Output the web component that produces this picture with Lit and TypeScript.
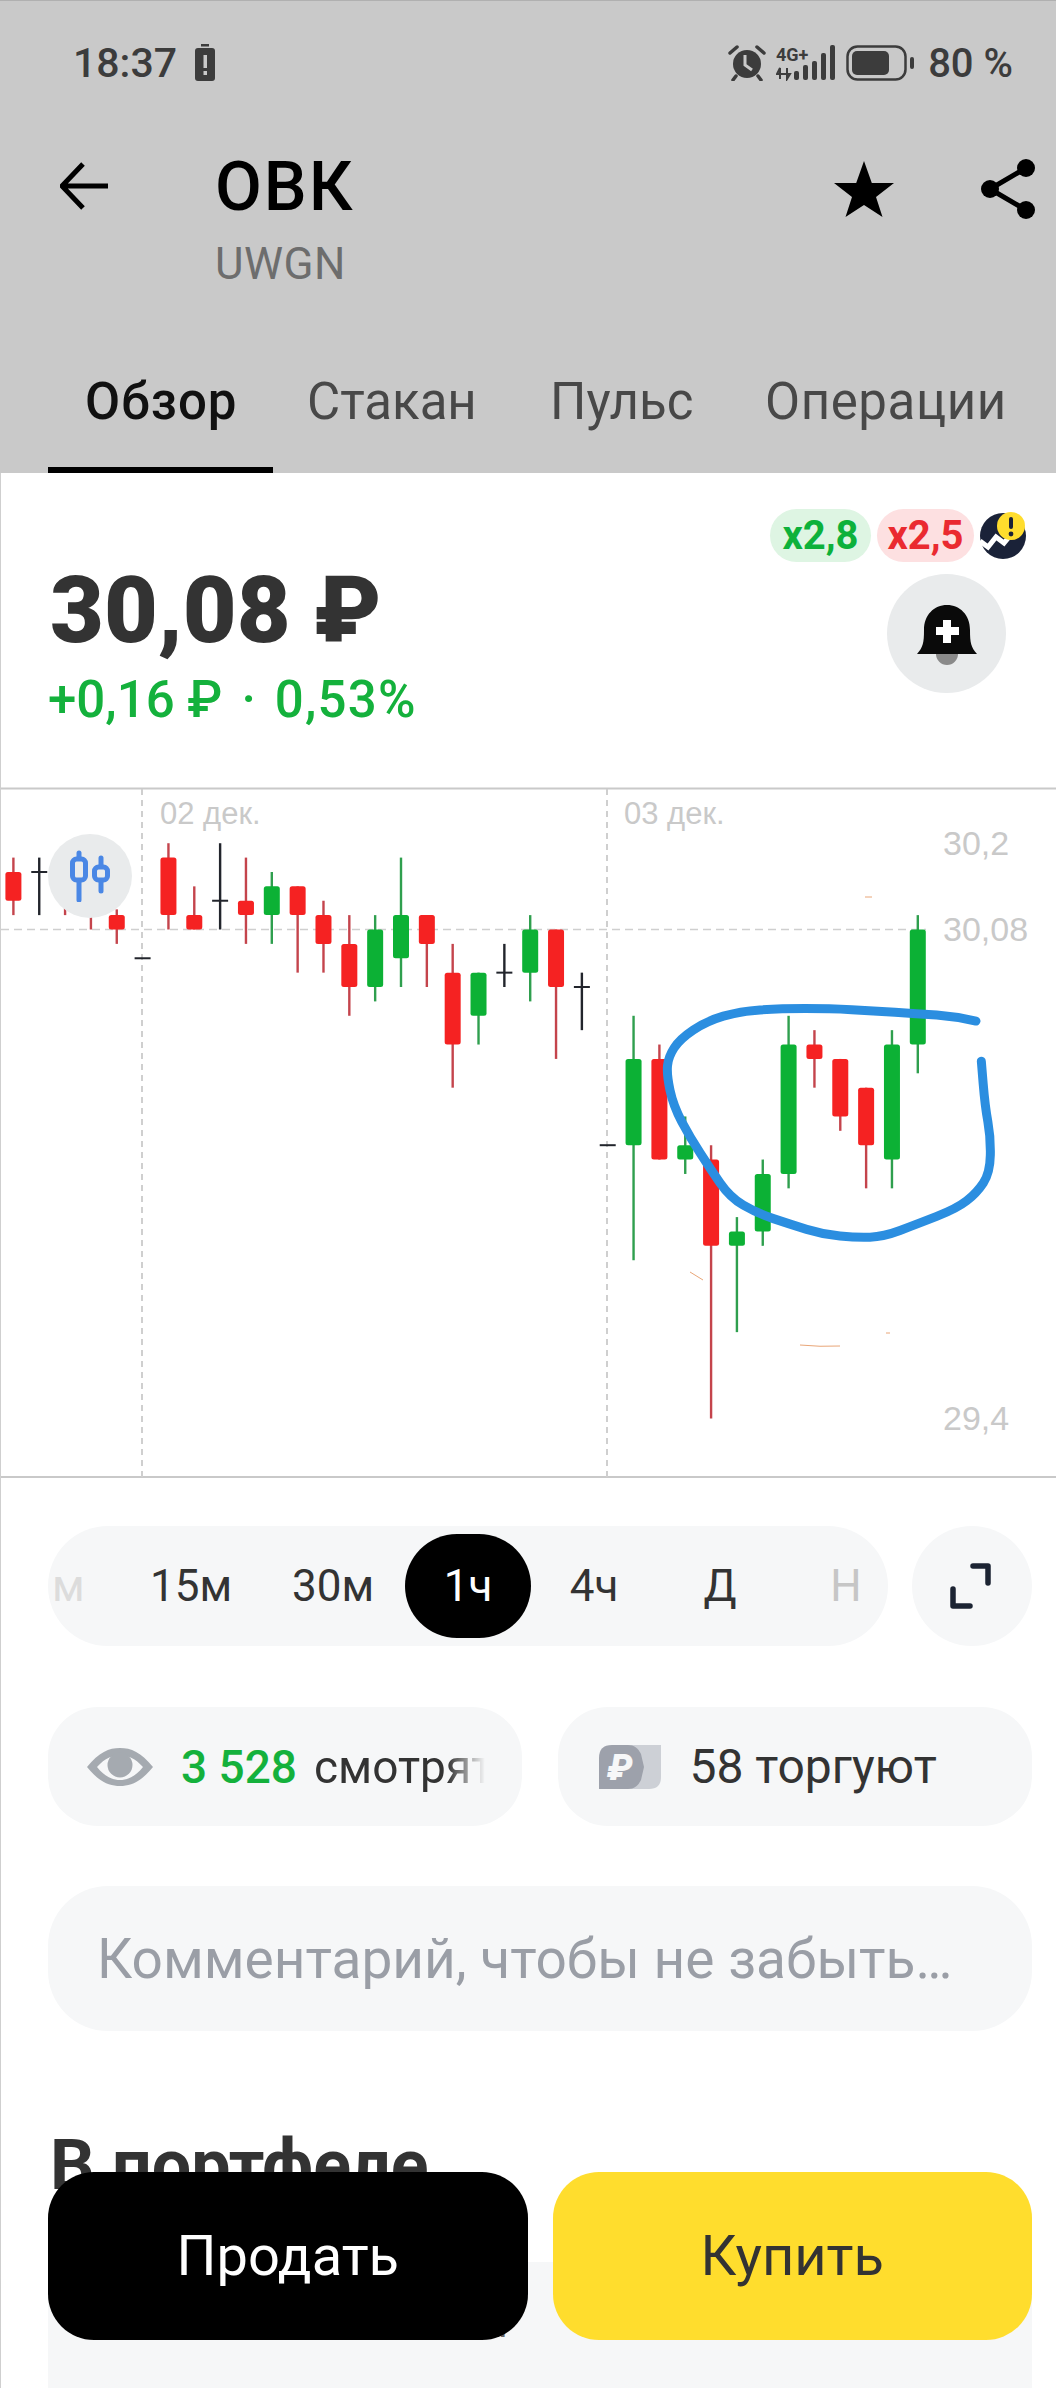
import { LitElement, html, css, svg } from "lit";
import { customElement } from "lit/decorators.js";

type C = [string, number, number, number, number];
const data: C[] = [
  ["r",-5,-1,-4,-2],["k",-5,-1,-4,-4],["r",-5,-1,-4,-2],["r",-4,0,-3,-1.5],["r",-1.4,1,-1,0],["k",2,2,2,2],
  ["r",-6,0,-5,-1],["r",-3,0,-1,0],["k",-6,0,-2,-2],["r",-5,1,-2,-1],["g",-4,1,-3,-1],["r",-3,3,-3,-1],
  ["r",-2,3,-1,1],["r",-1,6,1,4],["g",-1,5,0,4],["g",-5,4,-1,2],["r",-1,4,-1,1],["r",1,11,3,8],
  ["g",3,8,3,6],["k",1,4,3,3],["g",-1,5,0,3],["r",0,9,0,4],["k",3,7,4,4],["k",15,15,15,15],
  ["g",6,23,9,15],["r",8,16,9,16],["g",13,17,15,16],["r",15,34,16,22],["g",20,28,21,22],["g",16,22,17,21],
  ["g",6,18,8,17],["r",7,11,8,9],["r",9,14,9,13],["r",11,18,11,15],["g",7,18,8,16],["g",-1,10,0,8],
];
const yOf = (k: number) => 929.5 + 14.38 * k;
const xOf = (n: number) => 12.4 + 25.84 * n;

const stroke: [number, number][] = [
  [1308,540],[1250,530],[1130,523],[1000,517],[870,512],[720,512],[600,518],[500,540],[420,580],[385,620],[380,660],
  [400,730],[450,800],[510,870],[570,935],[650,970],[750,995],[850,1018],[950,1025],[1030,1023],[1130,995],[1250,960],
  [1310,925],[1350,880],[1352,800],[1335,730],[1324,630],
];
const strokeD = () => {
  const p = stroke.map(([x, y]) => [539 + x / 3, 780 + y / 2.24]);
  let d = `M${p[0][0]} ${p[0][1]}`;
  for (let i = 1; i < p.length - 1; i++) {
    const mx = (p[i][0] + p[i + 1][0]) / 2, my = (p[i][1] + p[i + 1][1]) / 2;
    d += ` Q${p[i][0]} ${p[i][1]} ${mx} ${my}`;
  }
  const l = p[p.length - 1];
  return d + ` L${l[0]} ${l[1]}`;
};

@customElement("app-root")
export class AppRoot extends LitElement {
  static styles = css`
    :host { display: block; width: 1056px; height: 2388px; position: relative; overflow: hidden; background: #fff;
      font-family: Roboto, "Noto Sans", sans-serif; color: #333; }
    .head { background: #c9c9c9; height: 473px; border-top: 1px solid #b0b0b0; box-sizing: border-box; display: flex; flex-direction: column; }
    .status { display: flex; align-items: center; height: 44px; margin-top: 40px; padding-left: 73px; color: #3c3c3c; font-size: 41px; font-weight: 500; }
    .status .time { width: 121px; }
    .status .right { margin-left: auto; display: flex; align-items: center; gap: 10px; padding-right: 43px; }
    .status svg { display: block; }
    .status .pct { margin-left: 4px; white-space: pre; font-size: 40px; }
    .titlebar { display: flex; align-items: flex-start; margin-top: 75px; padding: 0 21px 0 60px; }
    .back { margin-top: 2px; flex: none; }
    .names { margin-left: 107px; }
    .name { font-size: 68px; line-height: 54px; color: #000; font-weight: 500; height: 54px; letter-spacing: 2px; }
    .ticker { font-size: 44px; line-height: 40px; color: #6d6d6d; margin-top: 30px; letter-spacing: .5px; }
    .actions { margin-left: auto; margin-top: -5px; }
    .actions svg { display: block; }
    .tabs { display: flex; margin-top: auto; height: 100px; box-sizing: border-box; padding-left: 48px; }
    .tab { flex: none; padding-left: 34px; font-size: 51px; color: #484848; line-height: 58px; box-sizing: border-box; height: 100px; }
    .tab.t1 { width: 225px; padding-left: 37px; color: #111; border-bottom: 6px solid #000; letter-spacing: 1px; font-weight: 500; }
    .tab.t2 { width: 243px; }
    .tab.t3 { width: 215px; }
    .tab.t4 { letter-spacing: .6px; }
    .body { border-left: 1px solid #cfcfcf; height: 1915px; box-sizing: border-box; }
    .quote { display: flex; justify-content: space-between; height: 314px; box-sizing: border-box; padding-left: 49px; }
    .price { font-size: 93px; font-weight: 900; line-height: 94px; margin-top: 91px; color: #333; }
    .delta { font-size: 51px; font-weight: 500; line-height: 52px; margin: 16px 0 0 -2px; color: #14b13c; white-space: pre; }
    .delta .dot { margin: 0 19px; }
    .delta .pc { letter-spacing: 1.2px; }
    .side { display: flex; flex-direction: column; align-items: flex-end; padding-right: 30px; padding-top: 36px; }
    .badges { display: flex; align-items: center; gap: 6px; }
    .badge { height: 53px; border-radius: 27px; font-size: 40px; font-weight: 700; display: flex; align-items: center; justify-content: center; line-height: 1; }
    .badge.g { width: 101px; background: #def5e3; color: #0db13b; }
    .badge.r { width: 97px; background: #fde0e1; color: #ea2a30; }
    .bell { width: 119px; height: 119px; border-radius: 50%; background: #e9ebec; display: flex; align-items: center; justify-content: center; margin: 12px 20px 0 0; }
    .chart { position: relative; height: 692px; }
    .chart svg.plot { display: block; width: 1055px; height: 692px; }
    .plot text { font-family: "Liberation Sans", Arial, sans-serif; fill: #c9c9c9; }
    .kind { position: absolute; left: 47px; top: 47px; width: 84px; height: 84px; border-radius: 50%; background: #e9ebec; display: flex; align-items: center; justify-content: center; }
    .frames { display: flex; gap: 24px; margin: 47px 24px 0 47px; height: 120px; }
    .bar { width: 840px; border-radius: 60px; background: #f6f7f8; display: flex; overflow: hidden; align-items: center; font-size: 44px; color: #333; }
    .cell { flex: none; width: 126px; height: 104px; display: flex; align-items: center; justify-content: center; }
    .cell.w1 { width: 140px; }
    .cell.w2 { width: 144px; }
    .cell.first { width: 73px; justify-content: flex-start; padding-left: 4px; box-sizing: border-box; color: #dcdcdc; }
    .cell.on { background: #000; color: #fff; border-radius: 52px; }
    .cell.dim { color: #c6c6c6; }
    .expand { width: 120px; height: 120px; border-radius: 50%; background: #f6f7f8; display: flex; align-items: center; justify-content: center; }
    .chips { display: flex; gap: 36px; margin: 61px 24px 0 47px; }
    .chip { flex: 1; height: 119px; border-radius: 50px; background: #f6f7f8; display: flex; align-items: center; font-size: 46px; color: #333; box-sizing: border-box; overflow: hidden; white-space: pre; }
    .chip.a { padding-left: 39px; }
    .chip.b { padding-left: 40px; }
    .chip .num { color: #14b13c; margin: 0 17px 0 28px; font-weight: 500; }
    .chip .fade { width: 171px; overflow: hidden; -webkit-mask-image: linear-gradient(90deg, #000 78%, transparent 100%); mask-image: linear-gradient(90deg, #000 78%, transparent 100%); }
    .chip .cnt { margin-left: 28px; font-size: 48px; }
    .comment { margin: 60px 24px 0 47px; height: 145px; border-radius: 60px; background: #f6f7f8; display: flex; align-items: center; padding-left: 49px; font-size: 55px; color: #9a9ea6; }
    .h2 { margin: 101px 0 0 49px; font-size: 70px; font-weight: 700; line-height: 66px; color: #333; height: 66px; white-space: nowrap; }
    .card { margin: 64px 24px 0 47px; height: 200px; background: #f6f7f8; font-size: 40px; line-height: 48px; color: #666; padding: 38px 0 0 50px; box-sizing: border-box; }
    .cta { position: absolute; left: 48px; right: 24px; bottom: 48px; display: flex; gap: 25px; }
    .btn { flex: 1; height: 168px; border-radius: 46px; display: flex; align-items: center; justify-content: center; font-size: 56px; }
    .btn.sell { background: #000; color: #fff; }
    .btn.buy { background: #ffdd2d; color: #333; }
  `;

  private candles() {
    return data.map(([c, wt, wb, bt, bb], n) => {
      const x = xOf(n);
      const fill = c === "r" ? "#f52222" : c === "g" ? "#0cb135" : "#22252c";
      const wick = c === "r" ? "#c4444c" : c === "g" ? "#2f9f4e" : "#22252c";
      const flat = bt === bb;
      return svg`
        ${wt !== wb ? svg`<line x1=${x} x2=${x} y1=${yOf(wt)} y2=${yOf(wb)} stroke=${wick} stroke-width="2.4"></line>` : ""}
        ${flat
          ? svg`<line x1=${x - 8} x2=${x + 8} y1=${yOf(bt)} y2=${yOf(bb)} stroke=${fill} stroke-width="2"></line>`
          : svg`<rect x=${x - 8} width="16" y=${yOf(bt)} height=${yOf(bb) - yOf(bt)} rx="2.5" fill=${fill}></rect>`}`;
    });
  }

  render() {
    return html`
      <div class="head">
        <div class="status">
          <span class="time">18:37</span>
          <svg width="22" height="38" viewBox="0 0 22 38"><rect x="7" y="0" width="8" height="2.5" fill="#3c3c3c"></rect><rect x="1" y="4" width="20" height="33" rx="3" fill="#3c3c3c"></rect><rect x="9.5" y="11" width="3.5" height="13" fill="#c9c9c9"></rect><rect x="9.5" y="27" width="3.5" height="4" fill="#c9c9c9"></rect></svg>
          <div class="right">
            <svg width="38" height="36" viewBox="0 0 38 36"><circle cx="19" cy="19" r="14" fill="#3c3c3c"></circle><path d="M2 8 L9 2 M36 8 L29 2 M8 31 L5 35 M30 31 L33 35" stroke="#3c3c3c" stroke-width="3.5" stroke-linecap="round"></path><path d="M17 10 V20 L24 25" fill="none" stroke="#c9c9c9" stroke-width="3"></path></svg>
            <svg width="60" height="36" viewBox="0 0 60 36"><text x="0" y="16" font-size="18" font-weight="700" fill="#3c3c3c" font-family="Roboto">4G+</text><path d="M4 34 V23 L1 29 H8 M11 23 V34 L14 29 H8" fill="none" stroke="#3c3c3c" stroke-width="2"></path><g fill="#3c3c3c"><rect x="18" y="26" width="5" height="9" rx="2"></rect><rect x="27" y="20" width="5" height="15" rx="2"></rect><rect x="36" y="16" width="5" height="19" rx="2"></rect><rect x="45" y="8" width="5" height="27" rx="2"></rect><rect x="54" y="0" width="5" height="35" rx="2"></rect></g></svg>
            <svg width="68" height="36" viewBox="0 0 68 36"><rect x="1.5" y="1.5" width="58" height="33" rx="10" fill="none" stroke="#3c3c3c" stroke-width="2.5"></rect><rect x="6" y="6" width="37" height="24" rx="5" fill="#3c3c3c"></rect><rect x="64" y="12" width="4" height="12" rx="2" fill="#3c3c3c"></rect></svg>
            <span class="pct">80 %</span>
          </div>
        </div>
        <div class="titlebar">
          <svg class="back" width="48" height="48" viewBox="0 0 48 48"><path d="M23 2 L2 24 L23 46 M2 24 H48" fill="none" stroke="#000" stroke-width="5"></path></svg>
          <div class="names"><div class="name">ОВК</div><div class="ticker">UWGN</div></div>
          <div class="actions">
            <svg width="201" height="66" viewBox="0 0 201 66">
              <path d="M30 6 L37.8 28 H60 L42 42 L48.5 62 L30 50 L11.5 62 L18 42 L0 28 H22.2 Z" fill="#000"></path>
              <path d="M192 13 L156 34 L192 55" fill="none" stroke="#000" stroke-width="5"></path><circle cx="192" cy="13" r="9" fill="#000"></circle><circle cx="156" cy="34" r="9" fill="#000"></circle><circle cx="192" cy="55" r="9" fill="#000"></circle>
            </svg>
          </div>
        </div>
        <div class="tabs">
          <div class="tab t1">Обзор</div><div class="tab t2">Стакан</div><div class="tab t3">Пульс</div><div class="tab t4">Операции</div>
        </div>
      </div>
      <div class="body">
        <div class="quote">
          <div>
            <div class="price">30,08 ₽</div>
            <div class="delta">+0,16 ₽<span class="dot">·</span><span class="pc">0,53%</span></div>
          </div>
          <div class="side">
            <div class="badges">
              <div class="badge g">x2,8</div>
              <div class="badge r">x2,5</div>
              <svg width="46" height="50" viewBox="0 0 46 50"><circle cx="23" cy="25" r="23" fill="#1a2238"></circle><path d="M0 30 L8 36 L16 26 L24 32 L34 20" fill="none" stroke="#fff" stroke-width="5"></path><circle cx="31" cy="15" r="14" fill="#ffdd2d"></circle><rect x="29" y="6" width="4" height="12" rx="2" fill="#1a2238"></rect><circle cx="31" cy="23" r="2.4" fill="#1a2238"></circle></svg>
            </div>
            <div class="bell">
              <svg width="60" height="60" viewBox="0 0 60 60" style="margin-top:2px"><circle cx="30" cy="49" r="11" fill="#8a8a8a"></circle><path d="M0 49 C6 42 7 38 7 25 C7 10 17 0 30 0 C43 0 53 10 53 25 C53 38 54 42 60 49 Z" fill="#0a0a0a"></path><rect x="19" y="22" width="23" height="8" fill="#fff"></rect><rect x="26" y="15" width="8" height="23" fill="#fff"></rect></svg>
            </div>
          </div>
        </div>
        <div class="chart">
          <svg class="plot" viewBox="0 787 1055 692">
            <line x1="0" x2="1055" y1="788.5" y2="788.5" stroke="#c9c9c9" stroke-width="2"></line>
            <line x1="0" x2="1055" y1="1477" y2="1477" stroke="#c9c9c9" stroke-width="2"></line>
            <line x1="0" x2="925" y1="929.5" y2="929.5" stroke="#cfcfcf" stroke-width="1.5" stroke-dasharray="8 5"></line>
            <line x1="141" x2="141" y1="789" y2="1477" stroke="#cfcfcf" stroke-width="2" stroke-dasharray="6 5"></line>
            <line x1="606" x2="606" y1="789" y2="1477" stroke="#cfcfcf" stroke-width="2" stroke-dasharray="6 5"></line>
            <text x="159" y="824" font-size="31">02 дек.</text>
            <text x="623" y="824" font-size="31">03 дек.</text>
            <text x="942" y="855" font-size="34">30,2</text>
            <text x="942" y="941" font-size="34">30,08</text>
            <text x="942" y="1430" font-size="34">29,4</text>
            ${this.candles()}
            <path d=${strokeD()} fill="none" stroke="#2b8ee0" stroke-width="9" stroke-linecap="round" stroke-linejoin="round"></path>
            <path d="M864 897 H871 M689 1272 L702 1280 M799 1345 Q819 1347 839 1346 M885 1333 H889" fill="none" stroke="#e9a678" stroke-width="1"></path>
          </svg>
          <div class="kind">
            <svg width="40" height="52" viewBox="0 0 40 52"><g fill="none" stroke="#4a87e5" stroke-width="5" stroke-linecap="round"><path d="M9 3 V50"></path><rect x="2.5" y="9" width="13" height="21" rx="4" fill="#e9ebec"></rect><path d="M31 8 V41"></path><rect x="24.5" y="17" width="13" height="13" rx="4" fill="#e9ebec"></rect></g></svg>
          </div>
        </div>
        <div class="frames">
          <div class="bar">
            <div class="cell first">м</div>
            <div class="cell w1">15м</div>
            <div class="cell w2">30м</div>
            <div class="cell on">1ч</div>
            <div class="cell">4ч</div>
            <div class="cell">Д</div>
            <div class="cell dim">Н</div>
          </div>
          <div class="expand"><svg width="44" height="46" viewBox="0 0 44 46"><path d="M23 3 H38 V20 M3 26 V43 H20" fill="none" stroke="#1c2433" stroke-width="5.5" stroke-linecap="round" stroke-linejoin="round"></path></svg></div>
        </div>
        <div class="chips">
          <div class="chip a">
            <svg width="66" height="38" viewBox="0 0 66 38" style="flex:none"><path fill-rule="evenodd" d="M0 19 C12 4 22 0 33 0 C44 0 54 4 66 19 C54 34 44 38 33 38 C22 38 12 34 0 19Z M10 19 C18 29 26 32 33 32 C40 32 48 29 56 19 C48 10 40 7 33 7 C26 7 18 10 10 19Z" fill="#a5aab0"></path><circle cx="33" cy="17" r="12.5" fill="#a5aab0"></circle></svg>
            <span class="num">3 528</span><span class="fade">смотрят</span>
          </div>
          <div class="chip b">
            <svg width="64" height="46" viewBox="0 0 64 46" style="flex:none"><path d="M30 1 H63 V33 Q63 45 51 45 H30 Z" fill="#cdd0d6"></path><path d="M14 1 H30 C36 1 40 4 43 10 L46 23 L43 36 C40 42 36 45 30 45 H1 V14 Q1 1 14 1Z" fill="#9da1ab"></path><text x="22" y="36" text-anchor="middle" font-size="36" font-weight="900" font-style="italic" fill="#f6f7f8" font-family="Roboto">₽</text></svg>
            <span class="cnt">58 торгуют</span>
          </div>
        </div>
        <div class="comment">Комментарий, чтобы не забыть…</div>
        <div class="h2">В портфеле</div>
        <div class="card">Сейчас нет в наличии</div>
      </div>
      <div class="cta">
        <div class="btn sell">Продать</div>
        <div class="btn buy">Купить</div>
      </div>
    `;
  }
}
